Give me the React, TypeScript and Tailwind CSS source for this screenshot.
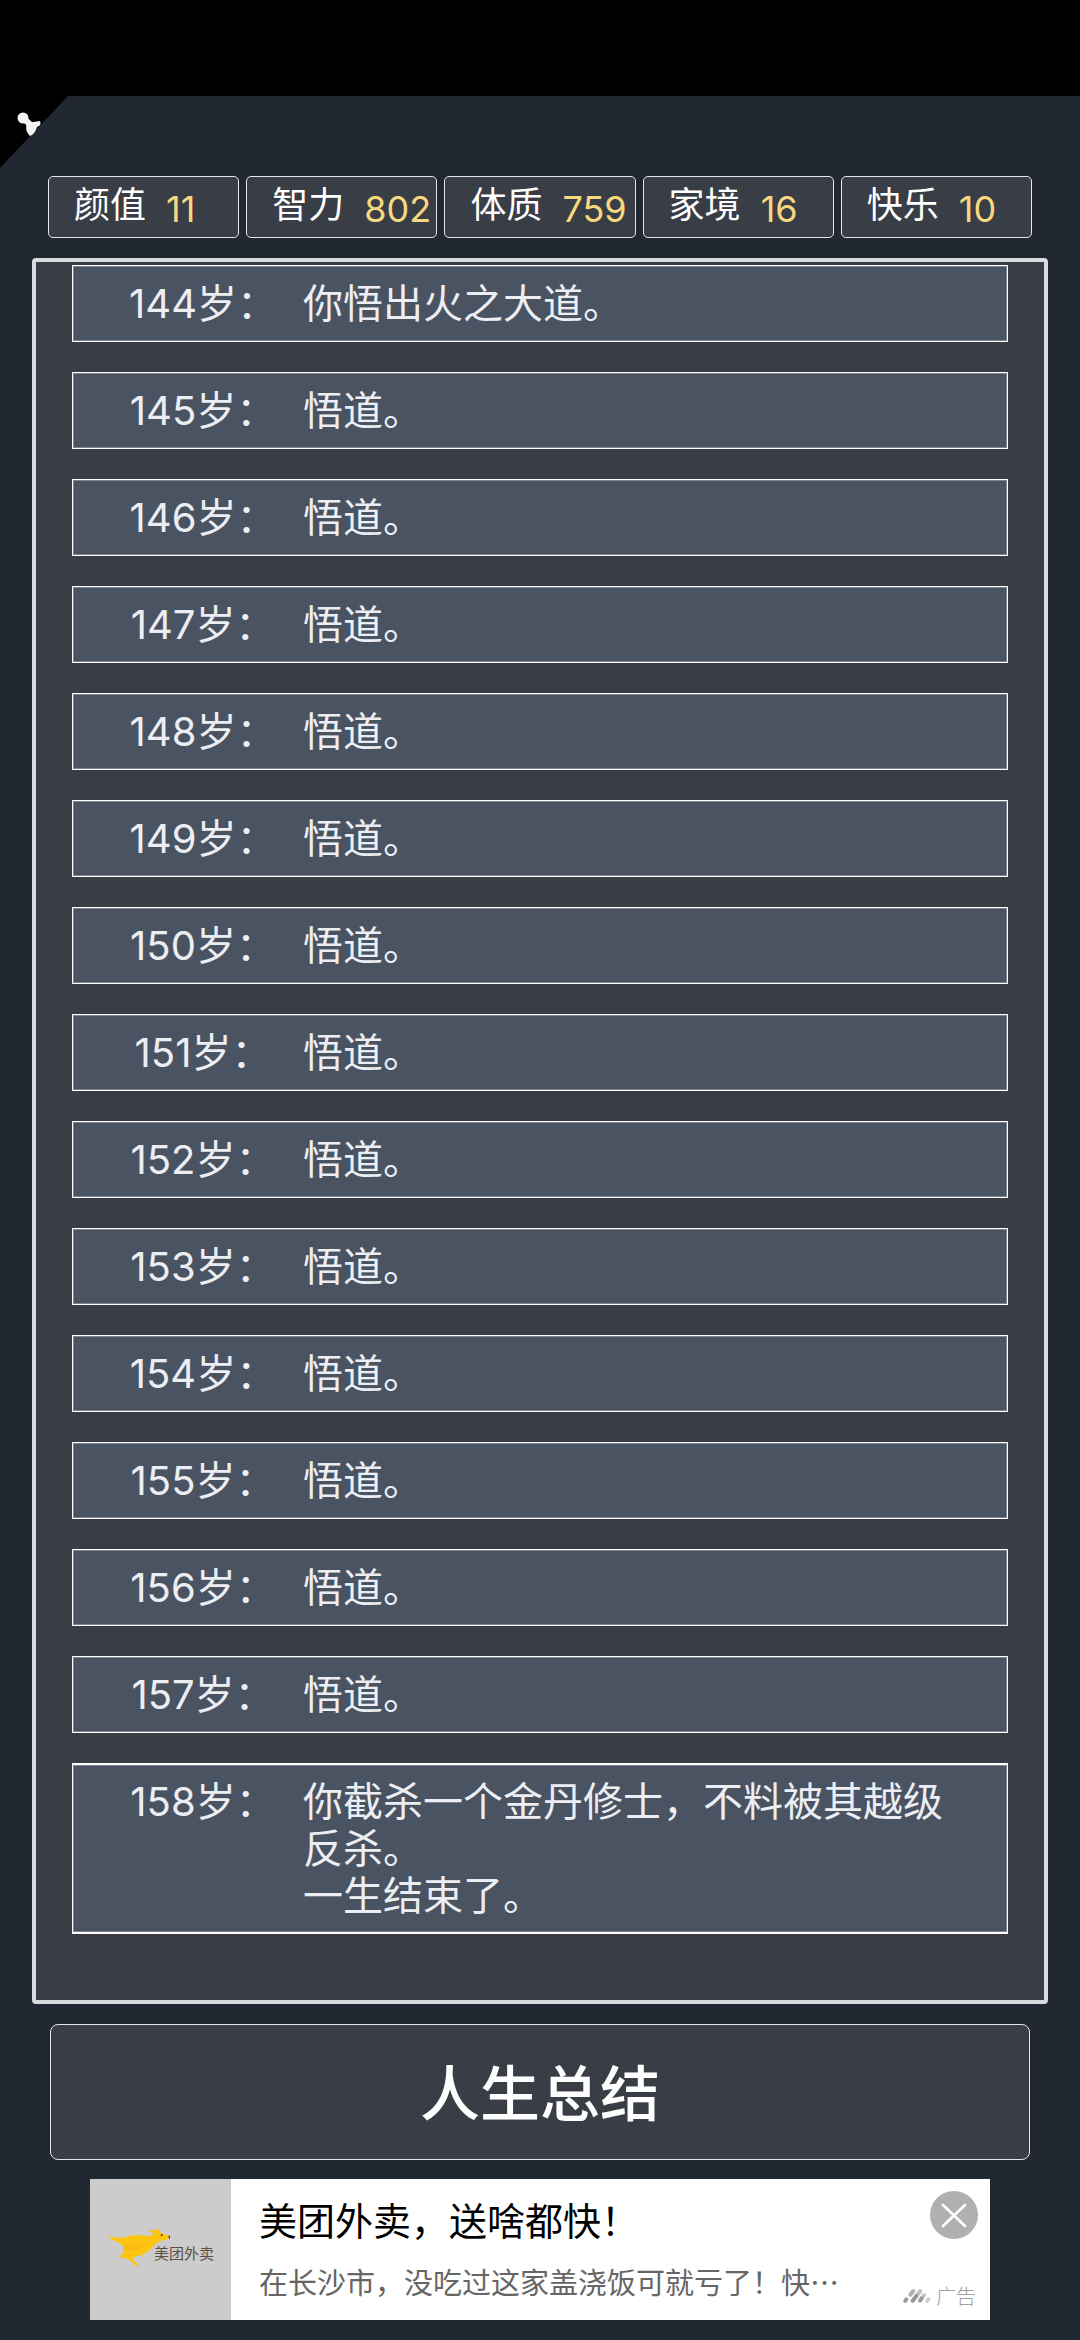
// 人生重开 — 人生轨迹页：属性栏、年龄事件列表、总结按钮、底部广告

interface Stat {
  label: string;
  value: number;
}

interface LifeEvent {
  age: number;
  lines: string[];
}

const STATS: Stat[] = [
  { label: '颜值', value: 11 },
  { label: '智力', value: 802 },
  { label: '体质', value: 759 },
  { label: '家境', value: 16 },
  { label: '快乐', value: 10 },
];

const EVENTS: LifeEvent[] = [
  { age: 144, lines: ['你悟出火之大道。'] },
  { age: 145, lines: ['悟道。'] },
  { age: 146, lines: ['悟道。'] },
  { age: 147, lines: ['悟道。'] },
  { age: 148, lines: ['悟道。'] },
  { age: 149, lines: ['悟道。'] },
  { age: 150, lines: ['悟道。'] },
  { age: 151, lines: ['悟道。'] },
  { age: 152, lines: ['悟道。'] },
  { age: 153, lines: ['悟道。'] },
  { age: 154, lines: ['悟道。'] },
  { age: 155, lines: ['悟道。'] },
  { age: 156, lines: ['悟道。'] },
  { age: 157, lines: ['悟道。'] },
  { age: 158, lines: ['你截杀一个金丹修士，不料被其越级反杀。', '一生结束了。'] },
];

function PinCorner() {
  return (
    <svg width="68" height="72" viewBox="0 0 68 72" aria-hidden>
      <path d="M0 0H68L0 72Z" fill="#000" />
      <g fill="#f4f4f4">
        <circle cx="23" cy="22" r="5.5" />
        <path d="M23 22L33 31" stroke="#f4f4f4" strokeWidth="6" />
        <path d="M27 27q6-1 13-2q2 4-3 6q-2 7-7 9q-6-6-3-13Z" />
      </g>
    </svg>
  );
}

function StatBox({ label, value }: Stat) {
  return (
    <div className="flex h-[62px] min-w-0 flex-1 gap-5 rounded-[5px] border border-[#e4e6e9] bg-[#393d45] pl-[25px] text-[36px] leading-[56px] whitespace-nowrap">
      <dt className="text-white">{label}</dt>
      <dd className="pt-1 text-[#f7d880]">{value}</dd>
    </div>
  );
}

function EventRow({ event, last }: { event: LifeEvent; last: boolean }) {
  return (
    <li
      className={`flex border-white bg-[#4a5361] pr-12 pl-[30px] text-[40px] leading-[47px] text-[#eceef3] shadow-[inset_0_0_0_1px_#7d8490] ${
        last ? 'border-x border-y-2 py-[13px]' : 'border py-[14px]'
      }`}
    >
      <span className="w-[200px] flex-none text-center whitespace-nowrap">{event.age}岁：</span>
      <div className="min-w-0 flex-1">
        {event.lines.map((line) => (
          <p key={line}>{line}</p>
        ))}
      </div>
    </li>
  );
}

function KangarooLogo() {
  return (
    <svg width="62" height="39" viewBox="0 0 186 117" className="flex-none" aria-hidden>
      <path
        fill="#fdc511"
        d="M0 23C16 26 34 32 52 28C70 22 90 19 108 23C122 25 134 21 141 17C133 15 123 11 122 6C130 3 140 8 144 10C145 4 147 0 151 2C155 6 154 10 157 14C166 16 178 20 185 26C184 33 176 36 168 36C156 38 146 43 139 51C130 62 120 72 110 77C103 82 92 83 86 84C80 88 74 90 72 92C80 99 88 105 91 112C89 117 84 117 82 113C74 103 64 97 54 91C44 91 36 88 35 84C40 79 47 76 48 68C46 60 44 54 42 49C32 44 12 38 0 23Z"
      />
      <path fill="#f2b00c" d="M50 44q28 14 58 4q-22 24-60 20Z" opacity=".4" />
      <circle cx="161" cy="21" r="3" fill="#4a3a10" />
      <path d="M182 24q5 4 2 8" stroke="#3a2e1c" strokeWidth="4" fill="none" />
    </svg>
  );
}

function AdMark() {
  return (
    <svg width="28" height="16" viewBox="0 0 84 48" fill="none" strokeLinecap="round" strokeWidth="12" aria-hidden>
      <path d="M7 39L10 34" stroke="#9b9b9b" />
      <path d="M22 20L31 9" stroke="#b0b0b0" />
      <path d="M40 24L52 9" stroke="#c2c2c2" />
      <path d="M29 38L40 24" stroke="#949494" />
      <path d="M56 31L64 21" stroke="#c6c6c6" />
      <path d="M51 38L56 31" stroke="#9b9b9b" />
      <path d="M73 39L76 34" stroke="#cfcfcf" />
    </svg>
  );
}

function AdBanner() {
  return (
    <aside className="relative mx-[90px] mt-[19px] flex h-[141px] bg-white font-['Noto_Sans_CJK_SC',sans-serif]">
      <div className="flex w-[141px] flex-none items-end bg-[#ccc] pb-[53px] pl-[18px]">
        <KangarooLogo />
        <span className="-ml-4 text-[15px] leading-[28px] whitespace-nowrap text-[#5f4c40]">美团外卖</span>
      </div>
      <a href="#ad" className="min-w-0 flex-1 pt-[14px] pl-[28px]">
        <h2 className="text-[38px] leading-[52px] text-black">美团外卖，送啥都快！</h2>
        <p className="text-[29px] leading-[72px] whitespace-nowrap text-[#666]">
          在长沙市，没吃过这家盖浇饭可就亏了！快…
        </p>
      </a>
      <button type="button" aria-label="关闭广告" className="absolute top-3 right-3 size-12 rounded-full bg-[#b0b0b0]">
        <svg viewBox="0 0 48 48" fill="none" aria-hidden>
          <path d="M13 14L35 35M35 14L13 35" stroke="#fff" strokeWidth="2.6" strokeLinecap="round" />
        </svg>
      </button>
      <div className="absolute right-[14px] bottom-2 flex items-center gap-[5px] text-[20px] leading-[32px] font-light text-[#a0a0a0]">
        <AdMark />
        <span>广告</span>
      </div>
    </aside>
  );
}

export default function App() {
  return (
    <div
      lang="zh-CN"
      className="min-h-screen bg-[#222831] pb-5 font-['Inter','Noto_Sans_CJK_SC',sans-serif]"
    >
      <div className="h-24 bg-black" />
      <header className="h-20">
        <PinCorner />
      </header>

      <dl className="flex gap-[7px] px-12">
        {STATS.map((stat) => (
          <StatBox key={stat.label} {...stat} />
        ))}
      </dl>

      <main className="mx-8 mt-5 rounded-[4px] border-4 border-[#d8dade] bg-[#393d45] px-9 pt-[3px] pb-[66px]">
        <ol className="flex flex-col gap-[30px]">
          {EVENTS.map((event, i) => (
            <EventRow key={event.age} event={event} last={i === EVENTS.length - 1} />
          ))}
        </ol>
      </main>

      <div className="mt-5 px-[50px]">
        <button
          type="button"
          className="h-[136px] w-full rounded-[8px] border border-[#e4e6e9] bg-[#393d45] pt-1 text-[60px] leading-[88px] font-medium text-white"
        >
          人生总结
        </button>
      </div>

      <AdBanner />
    </div>
  );
}
